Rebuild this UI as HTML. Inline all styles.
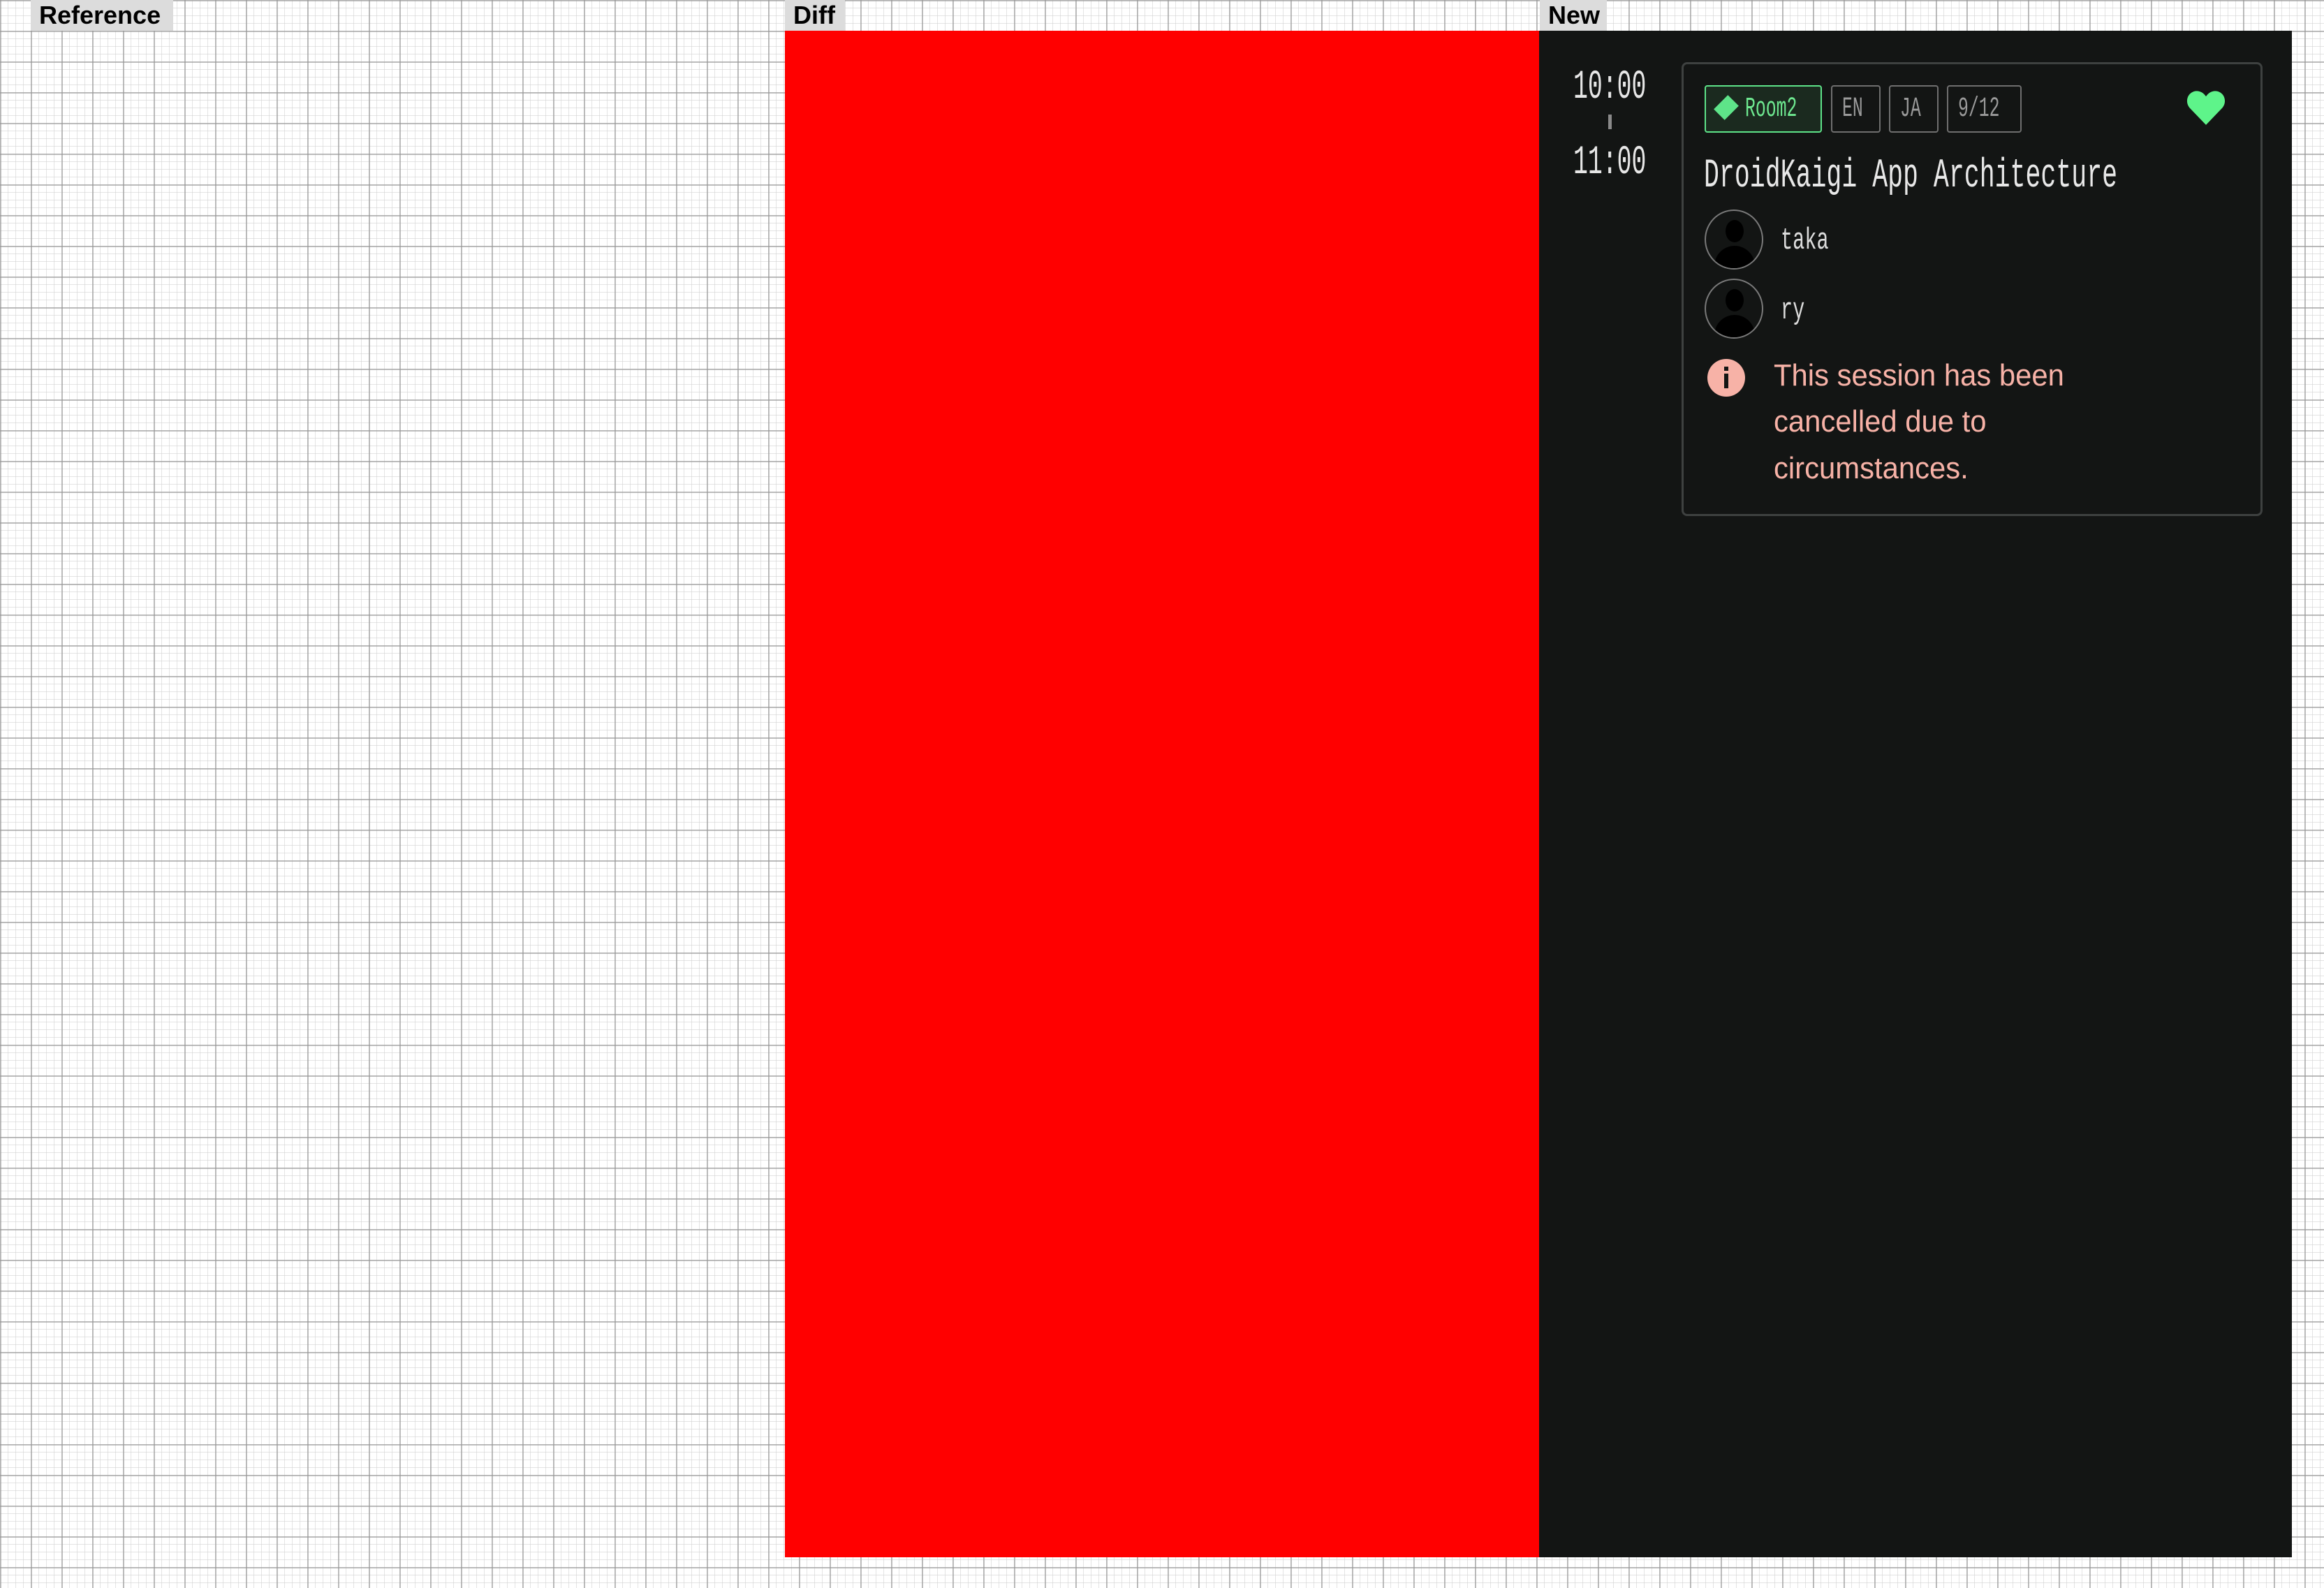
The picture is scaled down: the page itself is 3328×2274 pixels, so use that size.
<!DOCTYPE html>
<html><head><meta charset="utf-8"><style>
html,body{margin:0;padding:0;}
body{width:3328px;height:2274px;position:relative;overflow:hidden;background-color:#fff;
background-image:
linear-gradient(to right, rgba(150,150,150,.6) 2px, transparent 2px),
linear-gradient(to bottom, rgba(150,150,150,.6) 2px, transparent 2px),
linear-gradient(to right, rgba(210,210,210,.6) 1px, transparent 1px),
linear-gradient(to bottom, rgba(210,210,210,.6) 1px, transparent 1px);
background-size:44px 44px,44px 44px,11px 11px,11px 11px;
font-family:"Liberation Sans",sans-serif;}
.lab{position:absolute;top:0;height:44px;background:#dcdcdc;font-weight:bold;font-size:36px;line-height:44px;padding:0 12px;color:#000;box-sizing:border-box;}
.a{position:absolute;}
.mono{font-family:"Liberation Mono",monospace;white-space:nowrap;transform-origin:0 0;}
.chip{position:absolute;top:122px;height:68px;border:2px solid #6f6f6f;border-radius:4px;box-sizing:border-box;}
.ct{position:absolute;font-family:"Liberation Mono",monospace;font-size:40px;color:#9a9a9a;top:10px;transform:scaleX(.62);transform-origin:0 0;white-space:nowrap;}
.av{position:absolute;left:2441px;width:84px;height:86px;border:2px solid #7a7a7a;border-radius:50%;box-sizing:border-box;overflow:hidden;}
.av .h{position:absolute;left:28px;top:13px;width:26px;height:32px;border-radius:50%;background:#000;}
.av .b{position:absolute;left:12px;top:50px;width:58px;height:40px;border-radius:30px 30px 0 0;background:#000;}
.pk{position:absolute;left:2540px;font-size:44px;color:#f7b2a7;font-family:"Liberation Sans",sans-serif;white-space:nowrap;transform:scaleX(.95);transform-origin:0 0;}
</style></head><body>
<div class="lab" style="left:44px;width:204px;">Reference</div>
<div class="lab" style="left:1124px;width:86px;">Diff</div>
<div class="lab" style="left:2205px;width:96px;">New</div>

<div class="a" style="left:1124px;top:44px;width:1080px;height:2186px;background:#ff0000;"></div>
<div class="a" style="left:2204px;top:44px;width:1078px;height:2186px;background:#131514;"></div>

<div class="a mono" style="left:2253px;top:93px;font-size:58px;color:#e6e6e6;transform:scaleX(.6);">10:00</div>
<div class="a" style="left:2303px;top:164px;width:5px;height:21px;background:#8a8a8a;"></div>
<div class="a mono" style="left:2253px;top:201px;font-size:58px;color:#e6e6e6;transform:scaleX(.6);">11:00</div>

<div class="a" style="left:2408px;top:89px;width:832px;height:650px;border:3px solid #3e4140;border-radius:8px;box-sizing:border-box;"></div>

<div class="chip" style="left:2441px;width:168px;border-color:#5ee489;background:#1b2a1f;">
<div class="a" style="left:18px;top:19px;width:22px;height:22px;background:#5ee489;transform:rotate(45deg) scaleY(1.3);"></div>
<div class="ct" style="left:56px;color:#6ee890;">Room2</div></div>
<div class="chip" style="left:2622px;width:71px;"><div class="ct" style="left:14px;">EN</div></div>
<div class="chip" style="left:2705px;width:71px;"><div class="ct" style="left:14px;">JA</div></div>
<div class="chip" style="left:2788px;width:107px;"><div class="ct" style="left:14px;">9/12</div></div>

<svg class="a" style="left:3130px;top:128px;" width="58" height="52" viewBox="0 0 24 22"><path d="M12 21.5 L2.2 11.3 C-0.6 8.2 0.2 2.8 4.5 1.3 C7.6 0.3 10.4 1.8 12 4.3 C13.6 1.8 16.4 0.3 19.5 1.3 C23.8 2.8 24.6 8.2 21.8 11.3 Z" fill="#5ef48a"/></svg>

<div class="a mono" style="left:2440px;top:220px;font-size:58px;color:#e8e8e8;transform:scaleX(.63);">DroidKaigi App Architecture</div>

<div class="av" style="top:300px;"><div class="h"></div><div class="b"></div></div>
<div class="a mono" style="left:2550px;top:320px;font-size:44px;color:#dcdcdc;transform:scaleX(.65);">taka</div>
<div class="av" style="top:399px;"><div class="h"></div><div class="b"></div></div>
<div class="a mono" style="left:2550px;top:420px;font-size:44px;color:#dcdcdc;transform:scaleX(.65);">ry</div>

<div class="a" style="left:2445px;top:514px;width:54px;height:54px;border-radius:50%;background:#f7b2a7;"></div>
<div class="a" style="left:2469px;top:525px;width:6px;height:6px;background:#131514;"></div>
<div class="a" style="left:2469px;top:535px;width:6px;height:21px;background:#131514;"></div>

<div class="pk" style="top:513px;">This session has been</div>
<div class="pk" style="top:579px;">cancelled due to</div>
<div class="pk" style="top:646px;">circumstances.</div>
</body></html>
